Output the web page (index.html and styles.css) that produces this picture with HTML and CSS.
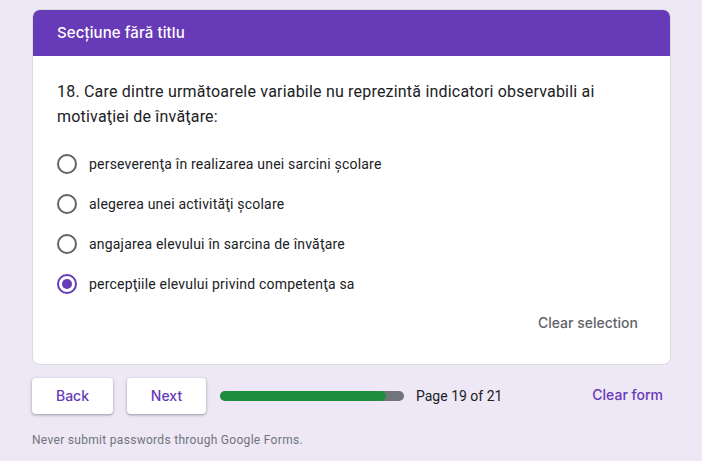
FILE: index.html
```html
<!DOCTYPE html>
<html lang="ro">
<head>
<meta charset="utf-8">
<link rel="stylesheet" href="styles.css">
</head>
<body>
<div class="wrap">
  <div class="card">
    <div class="card-head">Secțiune fără titlu</div>
    <div class="card-body">
      <div class="question">18. Care dintre următoarele variabile nu reprezintă indicatori observabili ai motivaţiei de învăţare:</div>
      <div class="options">
        <div class="opt"><span class="radio"></span><span class="label">perseverenţa în realizarea unei sarcini şcolare</span></div>
        <div class="opt"><span class="radio"></span><span class="label">alegerea unei activităţi şcolare</span></div>
        <div class="opt"><span class="radio"></span><span class="label">angajarea elevului în sarcina de învăţare</span></div>
        <div class="opt"><span class="radio checked"></span><span class="label">percepţiile elevului privind competenţa sa</span></div>
      </div>
      <div class="clear-row"><span class="clear-sel">Clear selection</span></div>
    </div>
  </div>
  <div class="nav">
    <button class="btn back">Back</button>
    <button class="btn next">Next</button>
    <div class="progress"><div class="fill" style="width:90%"></div></div>
    <span class="page">Page 19 of 21</span>
    <span class="clear-form">Clear form</span>
  </div>
  <div class="note">Never submit passwords through Google Forms.</div>
</div>
</body>
</html>
```
FILE: styles.css
```css
html, body { margin: 0; padding: 0; }
body {
  background: #ede7f6;
  font-family: Roboto, "Liberation Sans", sans-serif;
  color: #202124;
  width: 702px;
  height: 461px;
  overflow: hidden;
}
.wrap { padding: 9px 0 0 32px; width: 639px; }
.card {
  background: #fff;
  border: 1px solid #dadce0;
  border-radius: 8px;
  overflow: hidden;
  box-sizing: border-box;
}
.card-head {
  background: #673ab7;
  color: #fff;
  height: 47px;
  margin: -1px -1px 0 -1px;
  padding-left: 25px;
  display: flex;
  align-items: center;
  font-family: Inter, "Open Sans", sans-serif;
  font-weight: 500;
  font-size: 15px;
  letter-spacing: 0.1px;
}
.card-body { padding: 23px 32px 24px 24px; }
.question {
  font-size: 16px;
  line-height: 25px;
  letter-spacing: 0.2px;
  color: #202124;
}
.options { margin-top: 15px; display: flex; flex-direction: column; }
.opt { height: 40px; display: flex; align-items: center; }
.radio {
  width: 20px; height: 20px;
  box-sizing: border-box;
  border: 2px solid #5f6368;
  border-radius: 50%;
  display: flex; align-items: center; justify-content: center;
  flex: none;
}
.radio.checked { border-color: #673ab7; }
.radio.checked::after {
  content: "";
  width: 10px; height: 10px;
  border-radius: 50%;
  background: #673ab7;
}
.label { margin-left: 12px; font-size: 14px; color: #202124; letter-spacing: 0.2px; }
.clear-row { display: flex; justify-content: flex-end; height: 36px; align-items: center; }
.clear-sel {
  font-family: Inter, "Open Sans", sans-serif;
  font-weight: 500;
  font-size: 14px;
  color: #5f6368;
}
.nav {
  margin-top: 13px;
  display: flex;
  align-items: center;
  height: 36px;
}
.btn {
  height: 36px;
  border: none;
  background: #fff;
  border-radius: 4px;
  box-shadow: 0 1px 2px rgba(60,64,67,.3), 0 1px 3px 1px rgba(60,64,67,.15);
  color: #673ab7;
  font-family: Inter, "Open Sans", sans-serif;
  font-weight: 500;
  font-size: 14px;
  padding: 0 0 2px 0;
}
.back { width: 81px; }
.next { width: 79px; margin-left: 14px; }
.progress {
  margin-left: 14px;
  width: 184px;
  height: 10px;
  border-radius: 5px;
  background: #70757a;
  overflow: hidden;
}
.fill { height: 100%; background: #1e8e3e; border-radius: 5px; }
.page { margin-left: 12px; font-size: 14px; color: #202124; }
.clear-form {
  margin-left: auto;
  margin-right: 8px;
  margin-bottom: 3px;
  color: #673ab7;
  font-family: Inter, "Open Sans", sans-serif;
  font-weight: 500;
  font-size: 14px;
}
.note { margin-top: 19px; font-size: 12px; letter-spacing: 0.3px; color: #70757a; }
```
